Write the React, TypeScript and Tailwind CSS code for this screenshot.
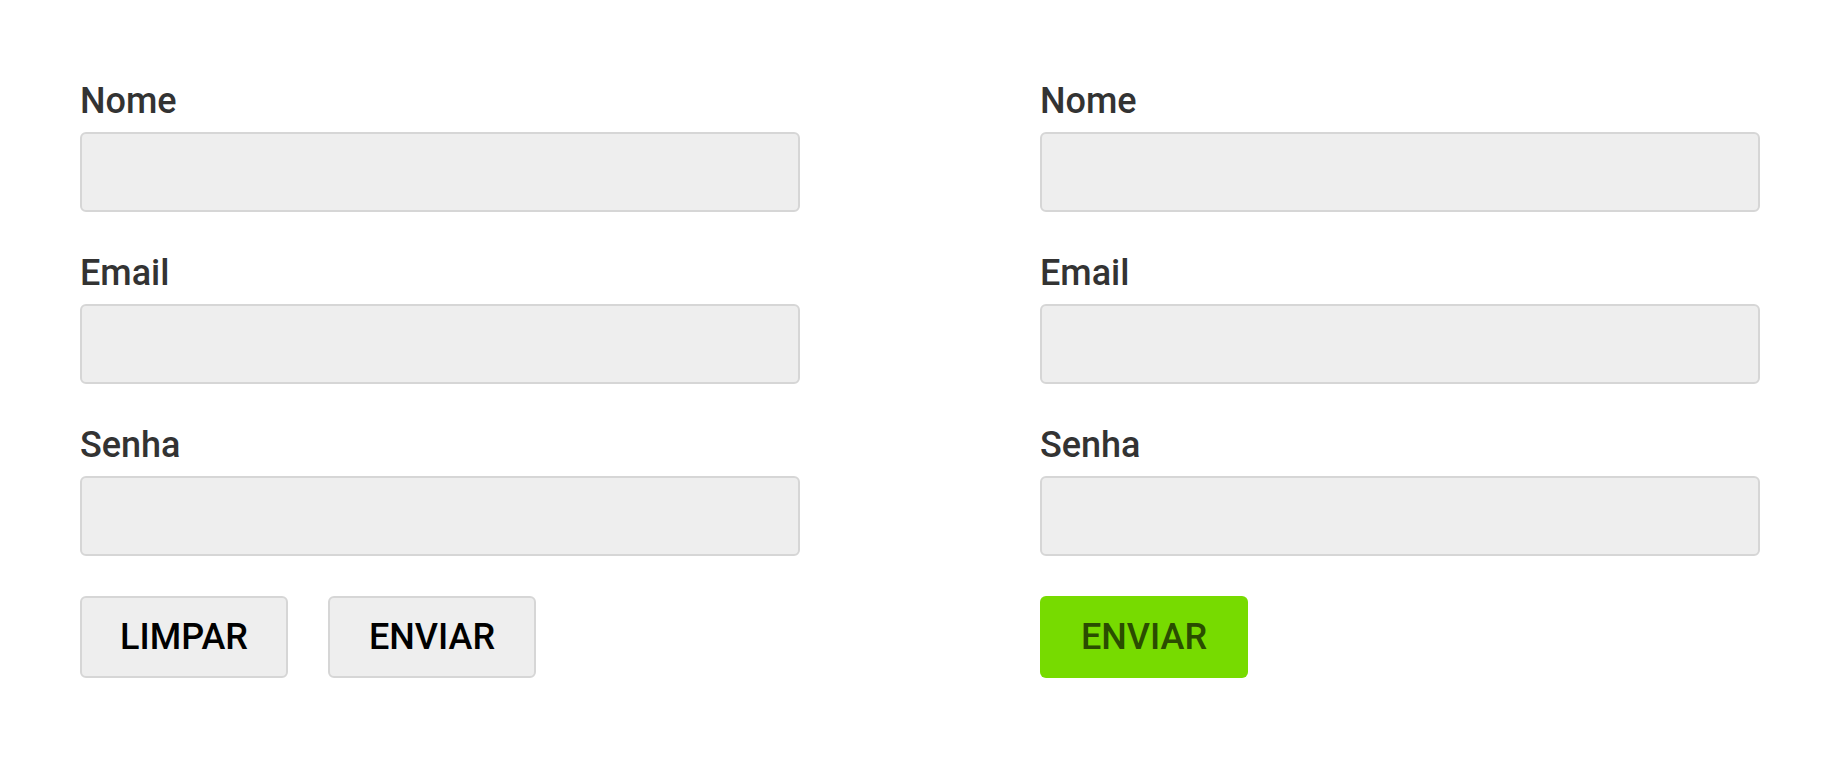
import React from "react";

function Field({ label }: { label: string }) {
  return (
    <div className="flex flex-col">
      <label className="text-[36px] leading-[42px] font-medium text-[#333333]">{label}</label>
      <input className="mt-[10px] h-[80px] w-full rounded-[6px] border-2 border-[#d6d6d6] bg-[#eeeeee] outline-none" />
    </div>
  );
}

function Form({ children }: { children: React.ReactNode }) {
  return (
    <div className="flex flex-col gap-[40px]">
      <Field label="Nome" />
      <Field label="Email" />
      <Field label="Senha" />
      <div className="flex gap-[40px]">{children}</div>
    </div>
  );
}

export default function App() {
  return (
    <div
      className="w-[1840px] h-[760px] bg-white p-[80px] grid grid-cols-2 gap-[240px] items-start"
      style={{ fontFamily: "Roboto, 'Noto Sans', sans-serif" }}
    >
      <Form>
        <button className="h-[82px] w-[208px] rounded-[6px] border-2 border-[#d6d6d6] bg-[#eeeeee] text-[36px] font-medium text-black">
          LIMPAR
        </button>
        <button className="h-[82px] w-[208px] rounded-[6px] border-2 border-[#d6d6d6] bg-[#eeeeee] text-[36px] font-medium text-black">
          ENVIAR
        </button>
      </Form>
      <Form>
        <button className="h-[82px] w-[208px] rounded-[6px] bg-[#77db00] text-[36px] font-medium text-[#2a4d00]">
          ENVIAR
        </button>
      </Form>
    </div>
  );
}
